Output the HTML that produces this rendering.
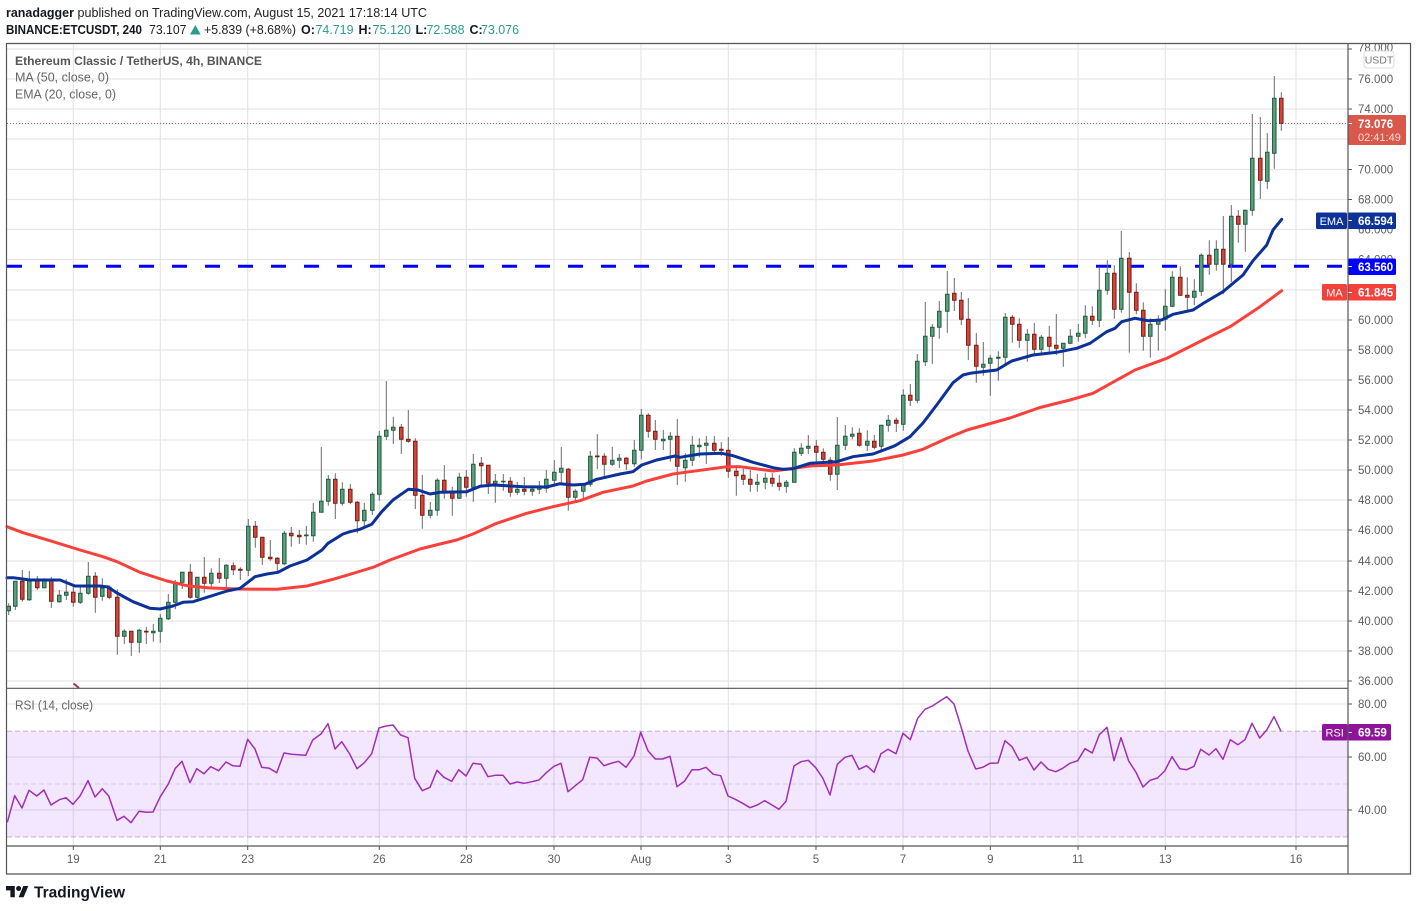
<!DOCTYPE html>
<html>
<head>
<meta charset="utf-8">
<title>ETCUSDT</title>
<style>
html,body{margin:0;padding:0;background:#fff;width:1417px;height:911px;overflow:hidden}
svg{display:block;font-family:"Liberation Sans",sans-serif}
.ax{font-size:11.5px;fill:#5d5d5d}
.tg{font-size:11.5px;fill:#fff;font-weight:bold}
.lg{font-size:12.5px;fill:#666}
.hd{font-size:12.5px;fill:#222}
.b{font-weight:bold;fill:#131722}
.t{fill:#2a9d8f}
</style>
</head>
<body>
<svg width="1417" height="911" viewBox="0 0 1417 911" xmlns="http://www.w3.org/2000/svg">
<rect width="1417" height="911" fill="#fff"/>

<!-- header -->
<text class="hd b" x="6" y="17" textLength="68" lengthAdjust="spacingAndGlyphs">ranadagger</text>
<text class="hd" x="77.5" y="17" textLength="349.5" lengthAdjust="spacingAndGlyphs">published on TradingView.com, August 15, 2021 17:18:14 UTC</text>
<text class="hd b" x="6" y="34" textLength="136" lengthAdjust="spacingAndGlyphs">BINANCE:ETCUSDT, 240</text>
<text class="hd" x="149" y="34" textLength="37.5" lengthAdjust="spacingAndGlyphs">73.107</text>
<path d="M190 34.500L195.300 25L200.700 34.500Z" fill="#2a9d8f"/>
<text class="hd" x="204" y="34" textLength="92" lengthAdjust="spacingAndGlyphs">+5.839 (+8.68%)</text>
<text class="hd b" x="301" y="34">O:</text><text class="hd t" x="315.500" y="34" textLength="38" lengthAdjust="spacingAndGlyphs">74.719</text>
<text class="hd b" x="358.500" y="34">H:</text><text class="hd t" x="372.500" y="34" textLength="38.500" lengthAdjust="spacingAndGlyphs">75.120</text>
<text class="hd b" x="415.500" y="34">L:</text><text class="hd t" x="426.500" y="34" textLength="38" lengthAdjust="spacingAndGlyphs">72.588</text>
<text class="hd b" x="469.500" y="34">C:</text><text class="hd t" x="481" y="34" textLength="38" lengthAdjust="spacingAndGlyphs">73.076</text>

<!-- grid -->
<path fill="none" stroke="#e6e6e6" stroke-width="1.2" d="M73.300 44V846M160.300 44V846M247.700 44V846M379.300 44V846M466.300 44V846M554 44V846M641 44V846M728.300 44V846M816 44V846M903 44V846M990.300 44V846M1078 44V846M1165.300 44V846M1296 44V846
M7 49H1348M7 79H1348M7 109H1348M7 139H1348M7 169.500H1348M7 199.500H1348M7 229.500H1348M7 259.500H1348M7 290H1348M7 320H1348M7 350H1348M7 380H1348M7 410H1348M7 440H1348M7 470H1348M7 500H1348M7 530H1348M7 561H1348M7 591H1348M7 621H1348M7 651H1348M7 681H1348
M7 704H1348M7 757H1348M7 810H1348"/>

<!-- legend -->
<text class="lg" x="15" y="65" style="fill:#555;font-weight:bold;font-size:12px" textLength="247" lengthAdjust="spacingAndGlyphs">Ethereum Classic / TetherUS, 4h, BINANCE</text>
<text class="lg" x="15" y="81.500" textLength="94" lengthAdjust="spacingAndGlyphs">MA (50, close, 0)</text>
<text class="lg" x="15" y="98.500" textLength="101" lengthAdjust="spacingAndGlyphs">EMA (20, close, 0)</text>
<text class="lg" x="15" y="709.500" textLength="78" lengthAdjust="spacingAndGlyphs">RSI (14, close)</text>

<!-- current price line and key level -->
<path d="M7 123.500H1348" stroke="#c6564b" stroke-width="1" stroke-dasharray="1 2" fill="none"/>
<path d="M7 266.300H1342" stroke="#0000ff" stroke-width="3" stroke-dasharray="15 18" fill="none"/>

<!-- wicks -->
<path fill="none" stroke="#6b6b6b" stroke-width="1" d="M8.700 603.300V615M15.300 581V610M22.300 570V601.700M29.300 571V601M37.300 576V590M44.300 578.300V588.300M51.300 576.700V608M59.300 590V602.700M66.300 579.300V600M73.300 585V606.700M80.300 585V604M88.300 562V594.700M95.300 572V612.700M102.300 578.300V600.700M109.300 585.300V599.300M117.300 589.300V654.700M124.300 629.300V644M131.300 631.300V656M139.300 628.700V652.700M146.300 626.700V644M153.300 624V641.700M160.300 614V642.700M168.300 594V620M175.300 580V609.300M182.300 571.700V589M190.300 564V598.700M197.300 577V598.700M204.300 557V592.700M211.300 568.300V589.300M219.300 558V583M226.300 564.300V591M233.300 562.300V575M240.300 567.300V580M248.300 519V576M255.300 521V547.700M262.300 537V565M270.300 540V560.700M277.300 557V574M284.300 531V565.300M291.300 527V546.700M299.300 530V544M306.300 526V544.700M313.300 503V541.700M321.300 447V512.500M328.300 475V505.700M335.300 473.300V519M342.300 482.300V505.700M350.300 484V504.300M357.300 501V533.300M364.300 503V526M372.300 492.300V515M379.300 431V500.700M386.300 381V440M393.300 416.700V444M401.300 424V454M408.300 410V442.700M415.300 438.300V509M422.300 475V528.700M430.300 502V518.300M437.300 478.300V515.700M444.300 465V498.700M452.300 487V515.700M459.300 472.700V498.700M466.300 470V496.700M473.300 454V501.700M481.300 457V485M488.300 465V494M495.300 474V502.700M503.300 474V490.700M510.300 477V496.700M517.300 482V494.700M524.300 477V495.300M532.300 485.700V495.700M539.300 481V494M546.300 470V492.700M554.300 460V485M561.300 447V485M568.300 468V510.700M575.300 489.300V502.700M583.300 483V499.300M590.300 451V486.700M597.300 434V469M604.300 453.300V478.300M612.300 447V466M619.300 454V468M626.300 457V470M634.300 440V466.700M641.300 409V459.300M648.300 413.300V437.700M655.300 420V450M663.300 430V450M670.300 432V461.700M677.300 419V485M685.300 453.300V481.700M692.300 436V466M699.300 438.300V457.300M706.300 436V464M714.300 436V455M721.300 442V456M728.300 437V477.700M736.300 465V495.700M743.300 468.700V485M750.300 470V491.700M757.300 474V491.700M765.300 472.700V489.300M772.300 473.300V486.700M779.300 475V490.700M786.300 480V492.700M794.300 448.300V482.300M801.300 443.300V456M808.300 435V454M816.300 440V465M823.300 448.300V465M830.300 457.300V480.700M837.300 417V490M845.300 425V450M852.300 427.300V439.300M859.300 428.300V446.700M867.300 430.300V451M874.300 435V449.300M881.300 425V452.700M888.300 415V431.700M896.300 417.700V432M903.300 389.300V430.700M910.300 384V406M917.300 354V403.300M925.300 302V366M932.300 324V364M939.300 301V338.700M947.300 271V332.700M954.300 278V311M961.300 292V325M968.300 298V360M976.300 333V382.700M983.300 342V375.700M990.300 355V395.700M998.300 351.300V380.700M1005.300 313V364M1012.300 315V342.700M1019.300 318.300V347.700M1027.300 329V361.700M1034.300 323V356M1041.300 335V355M1049.300 326V354M1056.300 314V355M1063.300 343V366.700M1070.300 329V344.300M1078.300 324V341.700M1085.300 305.300V338.300M1092.300 306.300V325M1099.300 266.700V327.300M1107.300 260.300V294.700M1114.300 265.300V318.700M1121.300 231V312.700M1129.300 252V352.700M1136.300 283.300V314.300M1143.300 302.300V350.700M1150.300 318.300V357.700M1158.300 315.300V350.700M1165.300 289.300V330.700M1172.300 271.300V307.300M1180.300 266.300V296M1187.300 277.300V310.300M1194.300 279.300V305M1201.300 253.300V296M1209.300 240.300V274.700M1216.300 240.300V270.700M1223.300 216V294.300M1231.300 205V282M1238.300 210V242.700M1245.300 209.700V251.700M1252.300 114V215.700M1260.300 117V199M1267.300 133V188.700M1274.300 76V168.700M1281.300 92.300V130.700"/>

<!-- green bodies -->
<path fill="#5b9f7d" stroke="#1f5b3f" stroke-width="1" d="M6.950 606.300h3.500V610.700h-3.500zM13.550 581.300h3.500V606.300h-3.500zM27.550 579.700h3.500V599.700h-3.500zM42.550 579.700h3.500V587.700h-3.500zM57.550 595.300h3.500V601.700h-3.500zM64.550 592.300h3.500V595.300h-3.500zM78.550 593.300h3.500V602.300h-3.500zM86.550 576.300h3.500V593.300h-3.500zM100.550 588h3.500V596.300h-3.500zM122.550 631.300h3.500V636.300h-3.500zM137.550 630.300h3.500V642.300h-3.500zM151.550 631.300h3.500V632.700h-3.500zM158.550 618.300h3.500V631.300h-3.500zM166.550 602.300h3.500V618.700h-3.500zM173.550 582.300h3.500V602.300h-3.500zM180.550 572.300h3.500V582.300h-3.500zM195.550 577.300h3.500V597.300h-3.500zM209.550 573.300h3.500V583.300h-3.500zM224.550 565.300h3.500V578.300h-3.500zM246.550 526.300h3.500V570.300h-3.500zM282.550 533.300h3.500V563.700h-3.500zM304.550 535h3.500V535.700h-3.500zM311.550 512.300h3.500V535.700h-3.500zM319.550 501.300h3.500V512.300h-3.500zM326.550 479.300h3.500V501.300h-3.500zM340.550 489.300h3.500V503.300h-3.500zM362.550 510.300h3.500V520.700h-3.500zM370.550 494.300h3.500V510.300h-3.500zM377.550 436.300h3.500V494.300h-3.500zM384.550 430.300h3.500V436.300h-3.500zM391.550 427.300h3.500V430.300h-3.500zM428.550 510.300h3.500V515.300h-3.500zM435.550 480.300h3.500V510.300h-3.500zM457.550 477.300h3.500V498.300h-3.500zM471.550 464.300h3.500V487.300h-3.500zM493.550 481.300h3.500V483.300h-3.500zM501.550 481.300h3.500V481.700h-3.500zM515.550 489.300h3.500V492.300h-3.500zM530.550 489.300h3.500V491.300h-3.500zM537.550 487.300h3.500V489.300h-3.500zM544.550 479.300h3.500V488.300h-3.500zM552.550 472.300h3.500V480.300h-3.500zM559.550 468.300h3.500V472.300h-3.500zM573.550 491.300h3.500V497.300h-3.500zM581.550 484.300h3.500V491.300h-3.500zM588.550 456.300h3.500V484.300h-3.500zM610.550 460.300h3.500V464.300h-3.500zM617.550 458.300h3.500V460.300h-3.500zM632.550 450.300h3.500V463.700h-3.500zM639.550 415.300h3.500V450.300h-3.500zM661.550 439.300h3.500V440.700h-3.500zM668.550 436.300h3.500V439.300h-3.500zM683.550 460.300h3.500V467.700h-3.500zM690.550 445.300h3.500V460.300h-3.500zM697.550 445.300h3.500V446.700h-3.500zM704.550 443.300h3.500V445.300h-3.500zM755.550 482.300h3.500V484.300h-3.500zM763.550 478.300h3.500V482.300h-3.500zM784.550 482.300h3.500V486.300h-3.500zM792.550 452.300h3.500V482.300h-3.500zM799.550 448.300h3.500V453.300h-3.500zM806.550 446.300h3.500V448.300h-3.500zM835.550 445.300h3.500V474.300h-3.500zM843.550 436.300h3.500V445.300h-3.500zM850.550 434.300h3.500V436.300h-3.500zM865.550 441.300h3.500V445.300h-3.500zM879.550 425.300h3.500V446.300h-3.500zM886.550 420.300h3.500V425.300h-3.500zM901.550 395.300h3.500V424.300h-3.500zM915.550 361.300h3.500V400.300h-3.500zM923.550 336.300h3.500V361.700h-3.500zM930.550 327.300h3.500V336.300h-3.500zM937.550 311.300h3.500V327.300h-3.500zM945.550 294.300h3.500V311.300h-3.500zM981.550 364.300h3.500V367.300h-3.500zM988.550 358.300h3.500V363.300h-3.500zM996.550 357.300h3.500V358.300h-3.500zM1003.550 317.300h3.500V357.300h-3.500zM1025.550 334.300h3.500V340.300h-3.500zM1039.550 337.300h3.500V349.300h-3.500zM1061.550 343.300h3.500V348.300h-3.500zM1068.550 336.300h3.500V343.300h-3.500zM1076.550 333.300h3.500V336.300h-3.500zM1083.550 316.300h3.500V333.300h-3.500zM1097.550 290.300h3.500V320.300h-3.500zM1105.550 273.300h3.500V290.300h-3.500zM1119.550 258.300h3.500V309.300h-3.500zM1148.550 324.300h3.500V336.300h-3.500zM1156.550 320.300h3.500V324.300h-3.500zM1163.550 306.300h3.500V319.300h-3.500zM1170.550 277.300h3.500V306.300h-3.500zM1192.550 291.300h3.500V297.300h-3.500zM1199.550 255.300h3.500V291.300h-3.500zM1214.550 249.300h3.500V264.300h-3.500zM1229.550 216.300h3.500V264.300h-3.500zM1243.550 210.300h3.500V224.300h-3.500zM1250.550 158.300h3.500V210.300h-3.500zM1265.550 152.300h3.500V181.300h-3.500zM1272.550 98.300h3.500V153.300h-3.500z"/>

<!-- red bodies -->
<path fill="#d2473a" stroke="#7a1a12" stroke-width="1" d="M20.550 581.300h3.500V599.300h-3.500zM35.550 579.700h3.500V587.700h-3.500zM49.550 579.300h3.500V601.300h-3.500zM71.550 592.300h3.500V602.300h-3.500zM93.550 576.300h3.500V597.300h-3.500zM107.550 587.300h3.500V597.300h-3.500zM115.550 597.300h3.500V636.300h-3.500zM129.550 631.300h3.500V642.300h-3.500zM144.550 631.300h3.500V632h-3.500zM188.550 572.300h3.500V597.300h-3.500zM202.550 577.300h3.500V583.300h-3.500zM217.550 573.300h3.500V578.300h-3.500zM231.550 565.700h3.500V569.700h-3.500zM238.550 569.300h3.500V570.300h-3.500zM253.550 526.300h3.500V537.300h-3.500zM260.550 537.300h3.500V557.300h-3.500zM268.550 557.300h3.500V558.700h-3.500zM275.550 558.300h3.500V563.300h-3.500zM289.550 533.300h3.500V535.700h-3.500zM297.550 535.300h3.500V536.700h-3.500zM333.550 479.300h3.500V503.300h-3.500zM348.550 489.300h3.500V502.300h-3.500zM355.550 502.300h3.500V520.700h-3.500zM399.550 427.300h3.500V439.300h-3.500zM406.550 439.300h3.500V441.300h-3.500zM413.550 441.300h3.500V495.300h-3.500zM420.550 495.300h3.500V515.300h-3.500zM442.550 480.300h3.500V492.700h-3.500zM450.550 492.300h3.500V498.300h-3.500zM464.550 477.300h3.500V487.300h-3.500zM479.550 463.300h3.500V465.700h-3.500zM486.550 465.300h3.500V483.300h-3.500zM508.550 481.300h3.500V492.300h-3.500zM522.550 489.300h3.500V491.300h-3.500zM566.550 469.300h3.500V497.300h-3.500zM595.550 456h3.500V456.700h-3.500zM602.550 456.300h3.500V464.300h-3.500zM624.550 458.300h3.500V463.700h-3.500zM646.550 415.300h3.500V431.300h-3.500zM653.550 431.300h3.500V439.300h-3.500zM675.550 436.300h3.500V466.300h-3.500zM712.550 443.300h3.500V450.300h-3.500zM719.550 449.300h3.500V450.300h-3.500zM726.550 450.300h3.500V471.300h-3.500zM734.550 471.300h3.500V475.700h-3.500zM741.550 475.300h3.500V479.300h-3.500zM748.550 479.300h3.500V484.300h-3.500zM770.550 478.300h3.500V483.300h-3.500zM777.550 483.300h3.500V486.300h-3.500zM814.550 446.300h3.500V452.300h-3.500zM821.550 452.300h3.500V459.300h-3.500zM828.550 460.300h3.500V474.300h-3.500zM857.550 433.300h3.500V445.300h-3.500zM872.550 441.300h3.500V447.300h-3.500zM894.550 420.300h3.500V423.300h-3.500zM908.550 395.300h3.500V400.300h-3.500zM952.550 293.300h3.500V300.300h-3.500zM959.550 300.300h3.500V319.300h-3.500zM966.550 319.300h3.500V345.300h-3.500zM974.550 345.300h3.500V366.300h-3.500zM1010.550 317.300h3.500V324.300h-3.500zM1017.550 324.300h3.500V340.300h-3.500zM1032.550 334.300h3.500V349.300h-3.500zM1047.550 337.300h3.500V346.300h-3.500zM1054.550 345.300h3.500V348.300h-3.500zM1090.550 316.300h3.500V320.300h-3.500zM1112.550 273.300h3.500V309.300h-3.500zM1127.550 258.300h3.500V292.300h-3.500zM1134.550 292.300h3.500V310.300h-3.500zM1141.550 310.300h3.500V336.300h-3.500zM1178.550 277.300h3.500V295.300h-3.500zM1185.550 295.300h3.500V297.300h-3.500zM1207.550 255.300h3.500V264.300h-3.500zM1221.550 249.300h3.500V264.300h-3.500zM1236.550 216.300h3.500V224.300h-3.500zM1258.550 158.300h3.500V180.300h-3.500zM1279.550 98.300h3.500V123.300h-3.500z"/>

<!-- MA 50 -->
<polyline fill="none" stroke="#f9403a" stroke-width="3" stroke-linejoin="round" stroke-linecap="round" points="7,526.700 23,532.700 50,540.700 80,550 103,556.700 117,561.700 140,572.300 167,581 187,585.700 210,588 240,589 277,589.300 307,586 333,579.300 350,574.300 374,567 390,560 420,549 440,544 456.700,540 473,534 496.700,523.300 526.700,513.300 553,506.700 580,500.700 603,492.300 633,486 646.700,481 673,474 690,471.700 727,466.700 740,466.700 773,471 787,469.300 810,466 837,465 873,461 903,455 923,449.300 947,438.300 967,430 985,425 1010,418 1040,407.500 1070,400 1093,393.300 1120,378.300 1135,370 1166.700,358.300 1203,340 1230,326.700 1260,306.700 1281.700,290.700"/>

<!-- EMA 20 -->
<polyline fill="none" stroke="#0c3299" stroke-width="3" stroke-linejoin="round" stroke-linecap="round" points="7,577.700 14,577.800 30,580 60,580 75,586 100,586 108,587 117,593 133,601.700 150,608.300 160,609 173,606 183,602.300 193,601.700 207,597.300 227,591 240,588.300 255,576.700 267,574 278,572.300 290,566 307,560 322,550 328,543.300 343,534 350,531.700 360,529.300 371.700,524.300 381.700,511.700 393,500 408.300,489.300 418,490 430,494 440,492.300 466.700,491.700 480,486.300 493,485 523,486.700 546.700,487 560,483.700 573,485 585,484.300 596.700,479.300 620,474 633,471.700 641.700,465 656.700,460 675,456 680,457.300 700,454 721.700,453.300 733,455.700 753,462.300 773,467.700 783,469.300 793,468.700 810,463.300 836.700,461.700 853,456.700 873,454 895,445.700 910,436.700 923,423 936.700,405 953,382.700 963,375 970,373.300 996.700,370 1011.700,361 1033,355 1056.700,352.300 1076.700,348.300 1090,343.300 1106.700,331.700 1115,328.300 1121.700,321.700 1135,318.300 1148,320.700 1161.700,320 1173,314.300 1193,310 1205,302.300 1223,291.700 1243,275 1253,260.700 1266.700,245 1273,230 1281.700,219.300"/>

<!-- RSI band -->
<rect x="7" y="731.300" width="1341" height="105.700" fill="#9b30ff" fill-opacity=".12"/>
<path d="M7 731.300H1348M7 837H1348" stroke="#787b86" stroke-opacity=".5" stroke-width="1" stroke-dasharray="5 3" fill="none"/>
<path d="M7 784H1348" stroke="#787b86" stroke-opacity=".22" stroke-width="1" stroke-dasharray="5 3" fill="none"/>
<polyline fill="none" stroke="#a02fb5" stroke-width="1.500" stroke-linejoin="round" points="7.300,822.300 14.700,795.700 22,808 29,790.300 36.700,796 44,790 51,805 59.300,799.700 66,797.700 73,804.300 80,796 88,780.700 95,797 102.300,788.700 108.700,796 117,820.300 124,816.300 131,822.700 139,811.300 146,812.300 153,812 160.300,796.700 168.300,784 175.300,768.300 182,761.300 190,782.700 196.700,768.700 204,773.700 210.700,766.700 218.700,770.700 226,762 232.700,765.700 240,766.300 247.700,739.300 255,749 261.700,767.300 269.300,768.300 276.700,772.700 284,753 291.700,754.300 305.700,755.300 312.700,740 321,734 328,723.700 335,749 341.700,741.700 349.700,754 357,768.700 364.300,762.700 371.700,753.700 379,728 386,726 393,725 400.700,735 408,737.700 414.700,778.300 422.300,790.700 430,787.300 437,770.300 444,777.300 451.700,781.300 458.700,769.700 466,776 473,763.300 481,764.300 488,776.700 495.300,775.300 503,775.300 510,784 517,782 524.300,783.300 532,781.700 539,780 546.700,772.300 554,766.300 561,763.300 568,791.700 575.300,785.700 582.700,779.700 589.700,757.300 597,758 604,765.700 612,763 618.700,761.300 626,767.300 634,756 640.700,732.300 648,750.700 655.300,759 662.700,759 670,756.300 677,786.700 684.700,781 692,769.700 699.300,769.700 706,767.300 713.300,774.300 720.700,775.700 728,796 735.300,799.300 742.700,803.300 750,807.700 757.300,805 764.700,800.700 772,805 779,809.300 786,801.300 794,766 801,761.700 808.300,760.300 815.700,767.700 822.700,778 830,795 837.300,764.300 845,757.300 852,755.300 859,769.300 866.700,765.700 874,772.300 881,753.700 888,749.300 896,753.700 903,733.300 910.300,739.700 917.700,718.300 925,709.300 932.300,706 940,701 946.700,696.700 954,704 961,726.700 968,751 975.700,769 982.700,767.300 990,763.300 998,763 1005,740.700 1012,746.700 1019.300,760.300 1026.700,757.300 1034,770 1041,762 1048.300,769.300 1055.700,771.700 1062.700,768.300 1070,763.300 1077.700,760.700 1085,748.700 1092.300,753 1099.300,734.700 1107,727.300 1114,760.700 1121,737.700 1128.700,761 1136,772.300 1143,787 1150,780.300 1157.500,778 1164.700,771 1172,756.700 1179.700,768.700 1186.700,769.700 1194,766.300 1200.700,749.300 1209,755 1216,748.700 1223,759.300 1230.300,739.700 1238,744.700 1245,739.700 1252,723.300 1259.700,738 1266.700,730 1274,716.700 1281,731.300"/>

<!-- small arrow -->
<path d="M73.500 683.500L79 688" stroke="#a33a3a" stroke-width="2" fill="none"/>

<!-- axis labels -->
<g class="ax">
<text x="1358" y="51.500">78.000</text>
<text x="1358" y="83">76.000</text>
<text x="1358" y="113">74.000</text>
<text x="1358" y="173.500">70.000</text>
<text x="1358" y="203.500">68.000</text>
<text x="1358" y="233.500">66.000</text>
<text x="1358" y="263.500">64.000</text>
<text x="1358" y="324">60.000</text>
<text x="1358" y="354">58.000</text>
<text x="1358" y="384">56.000</text>
<text x="1358" y="414">54.000</text>
<text x="1358" y="444">52.000</text>
<text x="1358" y="474">50.000</text>
<text x="1358" y="504">48.000</text>
<text x="1358" y="534">46.000</text>
<text x="1358" y="565">44.000</text>
<text x="1358" y="595">42.000</text>
<text x="1358" y="625">40.000</text>
<text x="1358" y="655">38.000</text>
<text x="1358" y="685">36.000</text>
<text x="1358" y="708">80.00</text>
<text x="1358" y="761">60.00</text>
<text x="1358" y="814">40.00</text>
</g>
<path fill="none" stroke="#555" stroke-width="1" d="M1348 49h4M1348 79h4M1348 109h4M1348 169.500h4M1348 199.500h4M1348 290h4M1348 320h4M1348 350h4M1348 380h4M1348 410h4M1348 440h4M1348 470h4M1348 500h4M1348 530h4M1348 561h4M1348 591h4M1348 621h4M1348 651h4M1348 681h4M1348 704h4M1348 757h4M1348 810h4M73.300 846v4M160.300 846v4M247.700 846v4M379.300 846v4M466.300 846v4M554 846v4M641 846v4M728.300 846v4M816 846v4M903 846v4M990.300 846v4M1078 846v4M1165.300 846v4M1296 846v4"/>
<g class="ax" text-anchor="middle">
<text x="73.300" y="863">19</text>
<text x="160.300" y="863">21</text>
<text x="247.700" y="863">23</text>
<text x="379.300" y="863">26</text>
<text x="466.300" y="863">28</text>
<text x="554" y="863">30</text>
<text x="641" y="863">Aug</text>
<text x="728.300" y="863">3</text>
<text x="816" y="863">5</text>
<text x="903" y="863">7</text>
<text x="990.300" y="863">9</text>
<text x="1078" y="863">11</text>
<text x="1165.300" y="863">13</text>
<text x="1296" y="863">16</text>
</g>

<!-- USDT -->
<rect x="1364" y="51" width="30" height="17" rx="3" fill="#fff" stroke="#dcdcdc"/>
<text x="1379" y="63.500" text-anchor="middle" style="font-size:10.500px;fill:#777">USDT</text>

<!-- price tag -->
<rect x="1348" y="115" width="58" height="30" rx="1.500" fill="#d8584b"/>
<path d="M1348 123.500h4" stroke="#fff"/>
<text class="tg" x="1358" y="128">73.076</text>
<text x="1358" y="141" style="font-size:11px;fill:#fbdcd8">02:41:49</text>

<!-- EMA tag -->
<rect x="1316" y="212.500" width="31" height="16.500" rx="1.500" fill="#0c3299"/>
<text x="1331.500" y="225" text-anchor="middle" class="tg" style="font-weight:normal;font-size:11px">EMA</text>
<rect x="1348" y="212.500" width="48" height="16.500" rx="1.500" fill="#0c3299"/>
<path d="M1348 220.500h4" stroke="#fff"/>
<text class="tg" x="1358" y="225">66.594</text>

<!-- level tag -->
<rect x="1348" y="258.500" width="48" height="16.500" rx="1.500" fill="#0000ff"/>
<path d="M1348 266.500h4" stroke="#fff"/>
<text class="tg" x="1358" y="271">63.560</text>

<!-- MA tag -->
<rect x="1322" y="284" width="25" height="16.500" rx="1.500" fill="#f5413b"/>
<text x="1334.500" y="296.500" text-anchor="middle" class="tg" style="font-weight:normal;font-size:11px">MA</text>
<rect x="1348" y="284" width="48" height="16.500" rx="1.500" fill="#f5413b"/>
<path d="M1348 292.500h4" stroke="#fff"/>
<text class="tg" x="1358" y="296.500">61.845</text>

<!-- RSI tag -->
<rect x="1322" y="724" width="25.500" height="16.500" rx="1.500" fill="#8e1599"/>
<text x="1334.700" y="736.500" text-anchor="middle" class="tg" style="font-weight:normal;font-size:11px">RSI</text>
<rect x="1348" y="724" width="43" height="16.500" rx="1.500" fill="#8e1599"/>
<path d="M1348 732.500h4" stroke="#fff"/>
<text class="tg" x="1358" y="736.500">69.59</text>

<!-- frame -->
<rect x="0" y="0" width="1417" height="43" fill="#fff" style="display:none"/>
<path fill="none" stroke="#555" stroke-width="1.200" d="M6.500 43.500H1410.500V874H6.500ZM1348 43.500V874M6.500 688.300H1348M6.500 846H1348"/>

<!-- logo -->
<g fill="#131722">
<path d="M14.800 897.300h-4.400v-6.900H6v-4.400h8.800zM23.600 897.300h-5l4.700-11.300h5z"/>
<circle cx="18.600" cy="888.500" r="2.500"/>
</g>
<text x="34" y="897.500" textLength="91" lengthAdjust="spacingAndGlyphs" style="font-size:16px;font-weight:bold;fill:#131722">TradingView</text>
</svg>
</body>
</html>
